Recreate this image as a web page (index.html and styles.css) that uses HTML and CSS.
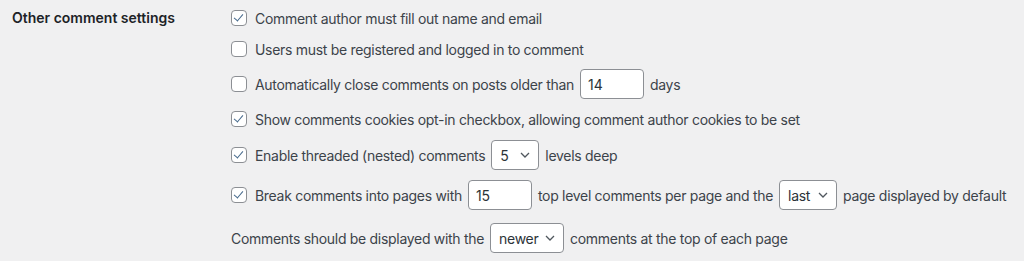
FILE: index.html
```html
<!DOCTYPE html>
<html lang="en">
<head>
  <meta charset="UTF-8">
  <title>Discussion Settings</title>
  <link rel="stylesheet" href="styles.css">
</head>
<body>

  <div class="form-row">
    <div class="form-label">Other comment settings</div>

    <fieldset class="options">
      <label class="opt">
        <input type="checkbox" checked>
        <span>Comment author must fill out name and email</span>
      </label>

      <label class="opt">
        <input type="checkbox">
        <span>Users must be registered and logged in to comment</span>
      </label>

      <label class="opt opt--field">
        <input type="checkbox">
        <span>Automatically close comments on posts older than</span>
        <input type="number" class="small-text" value="14">
        <span>days</span>
      </label>

      <label class="opt">
        <input type="checkbox" checked>
        <span>Show comments cookies opt-in checkbox, allowing comment author cookies to be set</span>
      </label>

      <label class="opt opt--field">
        <input type="checkbox" checked>
        <span>Enable threaded (nested) comments</span>
        <span class="select select--depth">
          <select>
            <option>2</option><option>3</option><option>4</option>
            <option selected>5</option><option>6</option><option>7</option>
          </select>
          <svg viewBox="0 0 10 6" width="10" height="6"><path d="M1 1l4 4 4-4" fill="none" stroke="#50575e" stroke-width="1.3"/></svg>
        </span>
        <span>levels deep</span>
      </label>

      <label class="opt opt--field">
        <input type="checkbox" checked>
        <span>Break comments into pages with</span>
        <input type="number" class="small-text" value="15">
        <span>top level comments per page and the</span>
        <span class="select select--page">
          <select>
            <option>first</option>
            <option selected>last</option>
          </select>
          <svg viewBox="0 0 10 6" width="10" height="6"><path d="M1 1l4 4 4-4" fill="none" stroke="#50575e" stroke-width="1.3"/></svg>
        </span>
        <span>page displayed by default</span>
      </label>

      <label class="opt opt--field">
        <span>Comments should be displayed with the</span>
        <span class="select select--order">
          <select>
            <option>older</option>
            <option selected>newer</option>
          </select>
          <svg viewBox="0 0 10 6" width="10" height="6"><path d="M1 1l4 4 4-4" fill="none" stroke="#50575e" stroke-width="1.3"/></svg>
        </span>
        <span>comments at the top of each page</span>
      </label>
    </fieldset>
  </div>

</body>
</html>
```

FILE: styles.css
```css
body {
  background-color: #f0f0f1;
  font-family: Inter, 'Noto Sans', 'Liberation Sans', sans-serif;
  color: #3c434a;
  font-size: 14px;
  margin: 0;
  padding: 0;
}

.form-row {
  display: flex;
  padding-top: 5px;
}

.form-label {
  flex-shrink: 0;
  width: 219px;
  padding-left: 12px;
  font-weight: 600;
  color: #1d2327;
  line-height: 26px;
}

.options {
  border: none;
  margin: 0;
  padding: 0;
  min-width: 0;
  display: grid;
  grid-template-rows: 31px 33px 37px 34px 40px 43px 30px;
  letter-spacing: -0.3px;
}

.opt {
  display: flex;
  align-items: center;
  gap: 6px;
  height: 26px;
  white-space: nowrap;
}

.opt--field {
  height: 30px;
}

input[type="checkbox"] {
  appearance: none;
  flex-shrink: 0;
  width: 16px;
  height: 16px;
  margin: 0 2px 0 0;
  border: 1px solid #8c8f94;
  border-radius: 4px;
  background-color: #ffffff;
  position: relative;
}

input[type="checkbox"]:checked::after {
  content: "";
  position: absolute;
  left: 4px;
  top: 1px;
  width: 4px;
  height: 8px;
  border: solid #46698c;
  border-width: 0 1.8px 1.8px 0;
  transform: rotate(40deg);
}

.small-text {
  appearance: none;
  -moz-appearance: textfield;
  box-sizing: border-box;
  width: 64px;
  height: 30px;
  padding: 0 7px;
  border: 1px solid #8c8f94;
  border-radius: 4px;
  background-color: #ffffff;
  color: #2c3338;
  font-family: inherit;
  font-size: 14px;
  margin: 0;
}

.small-text::-webkit-inner-spin-button,
.small-text::-webkit-outer-spin-button {
  -webkit-appearance: none;
  margin: 0;
}

.select {
  position: relative;
  display: inline-flex;
}

.select select {
  appearance: none;
  box-sizing: border-box;
  height: 30px;
  padding: 0 24px 0 8px;
  border: 1px solid #8c8f94;
  border-radius: 4px;
  background-color: #ffffff;
  color: #2c3338;
  font-family: inherit;
  font-size: 14px;
  letter-spacing: -0.3px;
  margin: 0;
}

.select svg {
  position: absolute;
  right: 9px;
  top: 12px;
  pointer-events: none;
}

.select--depth select {
  width: 48px;
}

.select--page select {
  width: 58px;
}

.select--order select {
  width: 74px;
}
```
